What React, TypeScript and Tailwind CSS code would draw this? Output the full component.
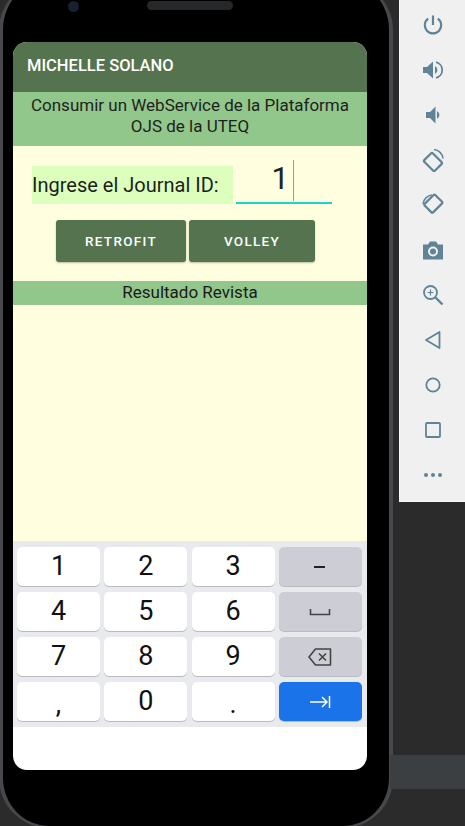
import React from 'react';

const ICON = '#5f8496';

const ToolIcon: React.FC<{ children: React.ReactNode }> = ({ children }) => (
  <div className="h-[45px] flex items-center justify-center">
    <svg width="24" height="24" viewBox="0 0 24 24" fill="none" stroke={ICON} strokeWidth="2">
      {children}
    </svg>
  </div>
);

const toolbar = [
  <><path d="M12 2.5v9.5" strokeWidth="2.2" /><path d="M7.2 5.6a8.2 8.2 0 1 0 9.6 0" strokeWidth="2.2" /></>,
  <><path d="M2 9v6h4l6 5.5V3.5L6 9z" fill={ICON} stroke="none" /><path d="M14 8a4.5 4.5 0 0 1 0 8z" fill={ICON} stroke="none" /><path d="M15 4.2a8 8 0 0 1 0 15.6" strokeWidth="1.8" /></>,
  <><path d="M5 9v6h4l5.5 5.5v-17L9 9z" fill={ICON} stroke="none" /><path d="M16 8a4.5 4.5 0 0 1 0 8z" fill={ICON} stroke="none" /></>,
  <><rect x="6" y="6.5" width="12" height="15" rx="1.5" transform="rotate(-45 12 14)" strokeWidth="2.2" /><path d="M13 1.5a10 10 0 0 1 9 9" strokeWidth="1.5" /></>,
  <><rect x="6" y="3" width="12" height="15" rx="1.5" transform="rotate(45 12 11)" strokeWidth="2.2" /><path d="M11 22a10 10 0 0 1-9-9" strokeWidth="0" /><path d="M2 11a10 10 0 0 1 9-9" strokeWidth="1.5" /></>,
  <><path d="M2 6.5h5l2-3h6l2 3h5v15H2z" fill={ICON} stroke="none" /><circle cx="12" cy="13.5" r="4" stroke="#f0f0f0" strokeWidth="2" /></>,
  <><circle cx="9.5" cy="9.5" r="6.5" strokeWidth="1.8" /><path d="M14.5 14.5l7 7" strokeWidth="2.4" /><path d="M9.5 6.5v6M6.5 9.5h6" strokeWidth="1.2" /></>,
  <path d="M18.5 4v16L5 12z" strokeWidth="1.8" strokeLinejoin="round" />,
  <circle cx="12" cy="12" r="6.7" strokeWidth="1.8" />,
  <rect x="5" y="5" width="14" height="14" rx="1" strokeWidth="1.8" />,
  <g fill={ICON} stroke="none"><circle cx="5" cy="12" r="2" /><circle cx="12" cy="12" r="2" /><circle cx="19" cy="12" r="2" /></g>,
];

type KeyProps = { children: React.ReactNode; kind?: 'num' | 'side' | 'go'; low?: boolean };

const Key: React.FC<KeyProps> = ({ children, kind = 'num', low }) => (
  <div
    className={`h-[39px] rounded-[5px] flex justify-center shadow-[0_1px_0_#b9bbc0] text-[27px] leading-none text-[#111] ${
      low ? 'items-end pb-[3px]' : 'items-center'
    } ${kind === 'num' ? 'bg-white' : kind === 'side' ? 'bg-[#cdced5]' : 'bg-[#1a73e8]'}`}
  >
    {children}
  </div>
);

export default function App() {
  return (
    <div className="w-[465px] h-[826px] bg-[#2b2b2b] overflow-hidden flex font-['Roboto',sans-serif]">
      <div className="w-[386px] h-[826px] shrink-0 -ml-[1px] -mt-[20px] pt-[20px] box-content rounded-b-[50px] rounded-t-[50px] border-x-[4px] border-b-[2px] border-[#46484c] bg-black">
        <div className="h-[42px] -mt-[0px] flex items-start">
          <div className="ml-[65px] mt-[1px] w-[11px] h-[11px] rounded-full bg-[#1a2030]" />
          <div className="ml-[68px] mt-[1px] w-[86px] h-[9px] rounded-full bg-[#26282a]" />
        </div>
        <div className="ml-[10px] w-[354px] h-[728px] rounded-[14px] overflow-hidden bg-white flex flex-col">
          <div className="h-[50px] bg-[#54734e] flex items-center pl-[14px] pb-[1px] text-[16.5px] font-medium text-white">
            MICHELLE SOLANO
          </div>
          <div className="h-[54px] bg-[#91c78a] pt-[3px] text-center text-[17px] leading-[21px] text-[#1f1f1f]">
            Consumir un WebService de la Plataforma
            <br />
            OJS de la UTEQ
          </div>
          <div className="h-[395px] bg-[#ffffdf] flex flex-col">
            <div className="flex items-start pl-[19px] mt-[20px] h-[38px]">
              <div className="w-[201px] h-[38px] bg-[#dcffbe] flex items-center text-[20px] text-[#1d1d1d] whitespace-nowrap">
                Ingrese el Journal ID:
              </div>
              <div className="ml-[3px] w-[96px] h-[38px] border-b-2 border-[#1dd4cc] -mt-[0px] flex justify-end pr-[38px] text-[31px] leading-[38px] text-[#222]">
                <span className="border-r border-[#1dd4cc] pr-[4px] -mt-[6px] h-[41px]">1</span>
              </div>
            </div>
            <div className="flex pl-[43px] gap-[3px] mt-[16px]">
              <div className="w-[130px] h-[42px] rounded-[3px] bg-[#54734e] shadow-[0_1px_2px_#0004] flex items-center justify-center text-[13.5px] font-medium tracking-[1.3px] text-white">
                RETROFIT
              </div>
              <div className="w-[126px] h-[42px] rounded-[3px] bg-[#54734e] shadow-[0_1px_2px_#0004] flex items-center justify-center text-[13.5px] font-medium tracking-[1.3px] text-white">
                VOLLEY
              </div>
            </div>
            <div className="mt-[19px] h-[24px] bg-[#91c78a] flex items-center justify-center text-[17px] text-[#1a1a1a]">
              Resultado Revista
            </div>
          </div>
          <div className="h-[186px] bg-[#e8eaed] grid grid-cols-[83px_83px_83px_83px] gap-x-[4.3px] gap-y-[6px] pl-[4px] pt-[6px] content-start">
            <Key>1</Key>
            <Key>2</Key>
            <Key>3</Key>
            <Key kind="side">
              <svg width="14" height="4" viewBox="0 0 14 4"><rect x="1" y="1" width="11" height="2" fill="#222" /></svg>
            </Key>
            <Key>4</Key>
            <Key>5</Key>
            <Key>6</Key>
            <Key kind="side">
              <svg width="22" height="8" viewBox="0 0 22 8" fill="none" stroke="#444" strokeWidth="1.6"><path d="M1.5 1v5.5h19V1" /></svg>
            </Key>
            <Key>7</Key>
            <Key>8</Key>
            <Key>9</Key>
            <Key kind="side">
              <svg width="24" height="18" viewBox="0 0 24 18" fill="none" stroke="#444" strokeWidth="1.6"><path d="M7.5 1H22.5V17H7.5L1 9z" strokeLinejoin="round" /><path d="M11 5.5l7 7M18 5.5l-7 7" /></svg>
            </Key>
            <Key low>,</Key>
            <Key>0</Key>
            <Key low>.</Key>
            <Key kind="go">
              <svg width="21" height="12" viewBox="0 0 21 12" fill="none" stroke="#fff" strokeWidth="1.5"><path d="M0 6h17M12 1l5 5-5 5M19.5 0v12" /></svg>
            </Key>
          </div>
        </div>
      </div>
      <div className="ml-[6px] flex flex-col flex-1">
        <div className="w-[66px] h-[502px] bg-[#f0f0f0] border-l border-b border-[#fafafa] pt-[2px]">
          {toolbar.map((icon, i) => (
            <ToolIcon key={i}>{icon}</ToolIcon>
          ))}
        </div>
        <div className="mt-[253px] -ml-[9px] h-[34px] bg-[#3c3f41]" />
      </div>
    </div>
  );
}
